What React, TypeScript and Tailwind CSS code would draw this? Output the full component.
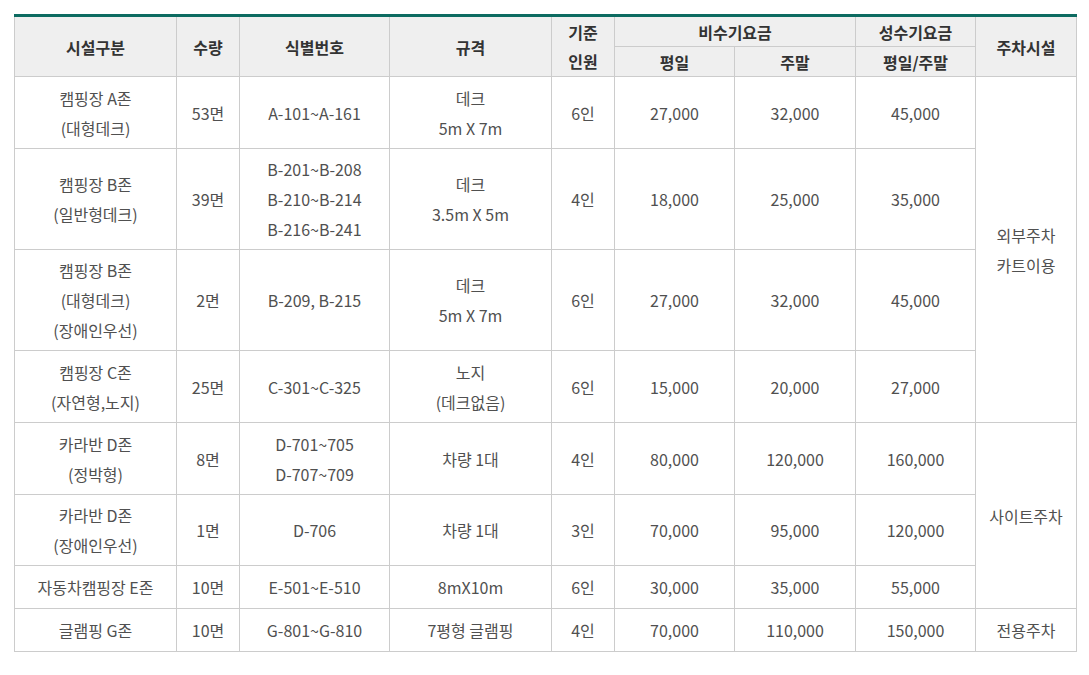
import React from "react";

type Row = {
  name: string[];
  qty: string;
  ids: string[];
  spec: string[];
  ppl: string;
  wd: string;
  we: string;
  peak: string;
  h: string;
};

const rows: Row[] = [
  { name: ["캠핑장 A존", "(대형데크)"], qty: "53면", ids: ["A-101~A-161"], spec: ["데크", "5m X 7m"], ppl: "6인", wd: "27,000", we: "32,000", peak: "45,000", h: "h-[72px]" },
  { name: ["캠핑장 B존", "(일반형데크)"], qty: "39면", ids: ["B-201~B-208", "B-210~B-214", "B-216~B-241"], spec: ["데크", "3.5m X 5m"], ppl: "4인", wd: "18,000", we: "25,000", peak: "35,000", h: "h-[101px]" },
  { name: ["캠핑장 B존", "(대형데크)", "(장애인우선)"], qty: "2면", ids: ["B-209, B-215"], spec: ["데크", "5m X 7m"], ppl: "6인", wd: "27,000", we: "32,000", peak: "45,000", h: "h-[101px]" },
  { name: ["캠핑장 C존", "(자연형,노지)"], qty: "25면", ids: ["C-301~C-325"], spec: ["노지", "(데크없음)"], ppl: "6인", wd: "15,000", we: "20,000", peak: "27,000", h: "h-[72px]" },
  { name: ["카라반 D존", "(정박형)"], qty: "8면", ids: ["D-701~705", "D-707~709"], spec: ["차량 1대"], ppl: "4인", wd: "80,000", we: "120,000", peak: "160,000", h: "h-[72px]" },
  { name: ["카라반 D존", "(장애인우선)"], qty: "1면", ids: ["D-706"], spec: ["차량 1대"], ppl: "3인", wd: "70,000", we: "95,000", peak: "120,000", h: "h-[71px]" },
  { name: ["자동차캠핑장 E존"], qty: "10면", ids: ["E-501~E-510"], spec: ["8mX10m"], ppl: "6인", wd: "30,000", we: "35,000", peak: "55,000", h: "h-[43px]" },
  { name: ["글램핑 G존"], qty: "10면", ids: ["G-801~G-810"], spec: ["7평형 글램핑"], ppl: "4인", wd: "70,000", we: "110,000", peak: "150,000", h: "h-[43px]" },
];

const td = "border border-[#cccccc] text-center align-middle px-1 leading-[30px]";
const th = "border border-[#cccccc] bg-[#efefef] text-center align-middle font-semibold text-[#333333] leading-[26px] px-1";
const top = "border-t-[3px] border-t-[#0d6b61]";

function Lines({ l }: { l: string[] }) {
  return (
    <>
      {l.map((s, i) => (
        <div key={i}>{s}</div>
      ))}
    </>
  );
}

export default function App() {
  return (
    <div
      className="bg-white w-[1089px] h-[675px] pt-[14px] pl-[14px]"
      style={{ fontFamily: '"Noto Sans CJK KR", "Noto Sans", sans-serif' }}
    >
      <table className={`w-[1062px] table-fixed border-collapse ${top} text-[16px] text-[#505050]`}>
        <colgroup>
          <col className="w-[162px]" />
          <col className="w-[63px]" />
          <col className="w-[150px]" />
          <col className="w-[162px]" />
          <col className="w-[63px]" />
          <col className="w-[120px]" />
          <col className="w-[121px]" />
          <col className="w-[120px]" />
          <col className="w-[101px]" />
        </colgroup>
        <thead>
          <tr className="h-[31px]">
            <th rowSpan={2} className={`${th} ${top}`}>시설구분</th>
            <th rowSpan={2} className={`${th} ${top}`}>수량</th>
            <th rowSpan={2} className={`${th} ${top}`}>식별번호</th>
            <th rowSpan={2} className={`${th} ${top}`}>규격</th>
            <th className={`${th} ${top} border-b-0`}>기준</th>
            <th colSpan={2} className={`${th} ${top}`}>비수기요금</th>
            <th className={`${th} ${top}`}>성수기요금</th>
            <th rowSpan={2} className={`${th} ${top}`}>주차시설</th>
          </tr>
          <tr className="h-[30px]">
            <th className={`${th} border-t-0`}>인원</th>
            <th className={th}>평일</th>
            <th className={th}>주말</th>
            <th className={th}>평일/주말</th>
          </tr>
        </thead>
        <tbody>
          {rows.map((r, i) => (
            <tr key={i} className={r.h}>
              <td className={td}><Lines l={r.name} /></td>
              <td className={td}>{r.qty}</td>
              <td className={td}><Lines l={r.ids} /></td>
              <td className={td}><Lines l={r.spec} /></td>
              <td className={td}>{r.ppl}</td>
              <td className={td}>{r.wd}</td>
              <td className={td}>{r.we}</td>
              <td className={td}>{r.peak}</td>
              {i === 0 && (
                <td rowSpan={4} className={td}>
                  <div>외부주차</div>
                  <div>카트이용</div>
                </td>
              )}
              {i === 4 && (
                <td rowSpan={3} className={td}>사이트주차</td>
              )}
              {i === 7 && <td className={td}>전용주차</td>}
            </tr>
          ))}
        </tbody>
      </table>
    </div>
  );
}
